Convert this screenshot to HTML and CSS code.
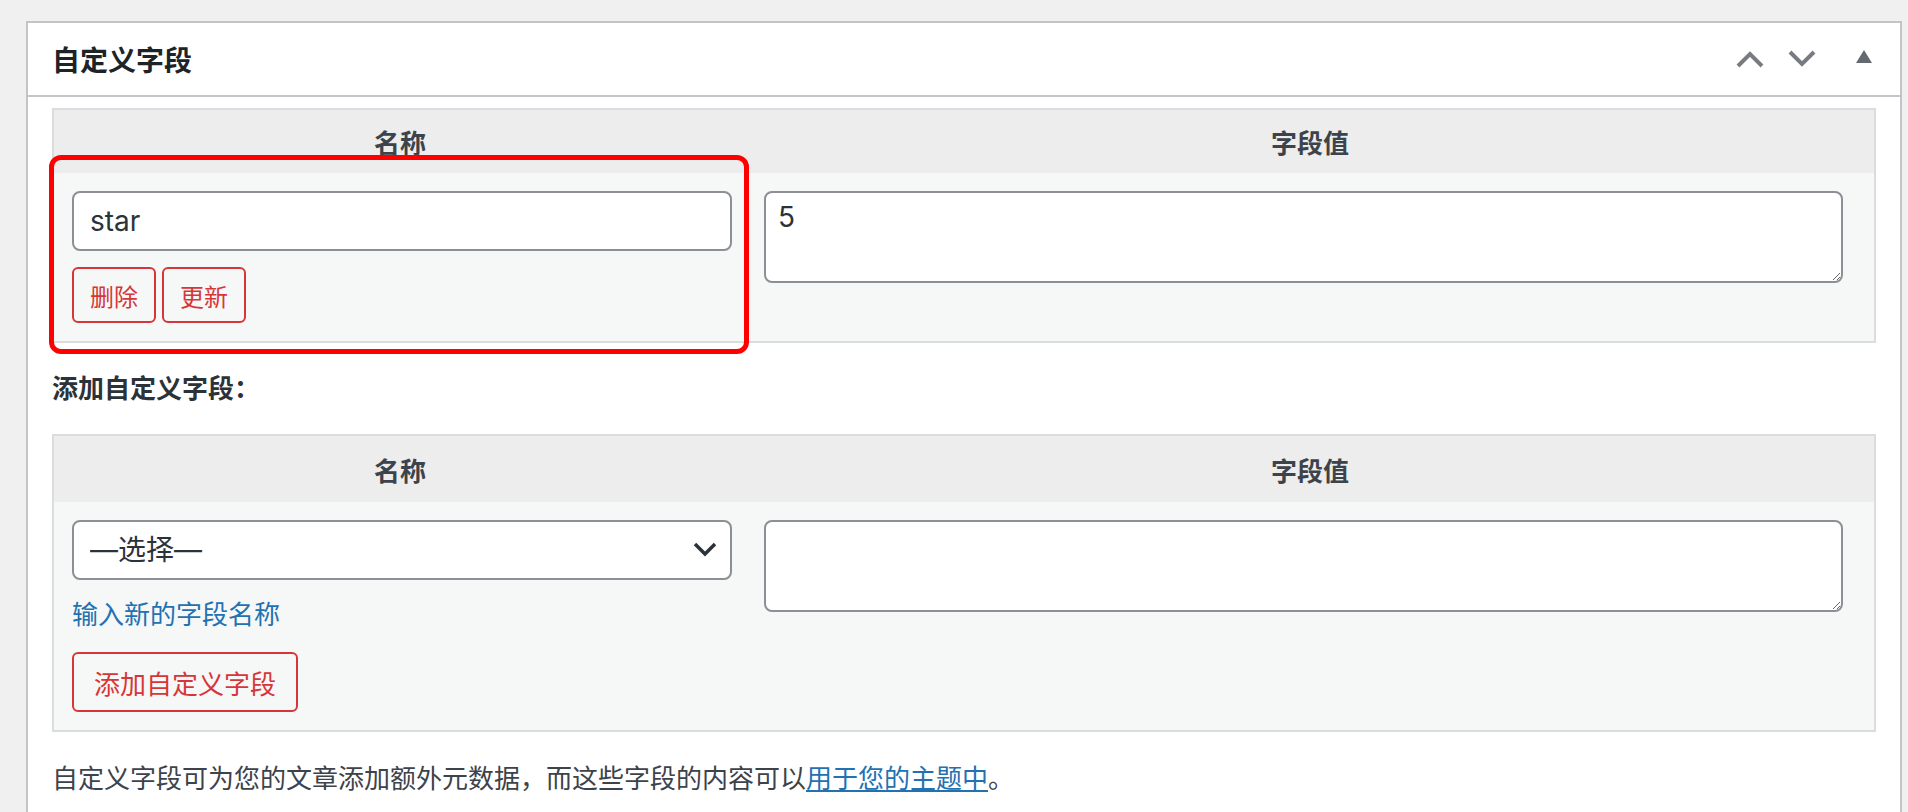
FILE: index.html
```html
<!DOCTYPE html>
<html lang="zh-CN">
<head>
  <meta charset="UTF-8" />
  <meta name="viewport" content="width=device-width, initial-scale=1.0"/>
  <title>自定义字段</title>
  <link rel="stylesheet" href="styles.css">
</head>
<body>
  <div class="postbox" id="postcustom">
    <div class="postbox-header">
      <h2>自定义字段</h2>
      <div class="handle-actions">
        <button class="handle-btn" aria-label="上移">
          <svg width="28" height="18" viewBox="0 0 28 18"><polyline points="2,16 14,4 26,16" fill="none" stroke="#787c82" stroke-width="4"/></svg>
        </button>
        <button class="handle-btn" aria-label="下移">
          <svg width="28" height="18" viewBox="0 0 28 18"><polyline points="2,2 14,14 26,2" fill="none" stroke="#787c82" stroke-width="4"/></svg>
        </button>
        <button class="handle-btn toggle" aria-label="折叠">
          <svg width="16" height="14" viewBox="0 0 16 14"><polygon points="0,13 8,0 16,13" fill="#646970"/></svg>
        </button>
      </div>
    </div>

    <div class="inside">
      <div class="meta-wrap">
        <table class="meta-table">
          <thead>
            <tr><th class="left">名称</th><th>字段值</th></tr>
          </thead>
          <tbody>
            <tr>
              <td class="left">
                <input type="text" class="field" value="star">
                <div class="row-actions">
                  <button class="btn btn-small">删除</button>
                  <button class="btn btn-small">更新</button>
                </div>
              </td>
              <td><textarea class="field-area" rows="2">5</textarea></td>
            </tr>
          </tbody>
        </table>
        <!-- annotation around the existing field -->
        <div class="highlight"></div>
      </div>

      <p class="add-title"><strong>添加自定义字段：</strong></p>

      <table class="meta-table new-meta">
        <thead>
          <tr><th class="left">名称</th><th>字段值</th></tr>
        </thead>
        <tbody>
          <tr>
            <td class="left">
              <div class="select-wrap">
                <select class="field">
                  <option>—选择—</option>
                </select>
                <svg class="select-arrow" width="24" height="16" viewBox="0 0 24 16"><polyline points="2,2 12,12 22,2" fill="none" stroke="#2c3338" stroke-width="3.5"/></svg>
              </div>
              <a href="#" class="enter-new">输入新的字段名称</a>
              <button class="btn">添加自定义字段</button>
            </td>
            <td><textarea class="field-area" rows="2"></textarea></td>
          </tr>
        </tbody>
      </table>

      <p class="help">自定义字段可为您的文章添加额外元数据，而这些字段的内容可以<a href="#">用于您的主题中</a>。</p>
    </div>
  </div>
</body>
</html>
```

FILE: styles.css
```css
* {
  margin: 0;
  padding: 0;
  box-sizing: border-box;
}

html, body {
  height: 100%;
  overflow: hidden;
}

body {
  background-color: #f0f0f1;
  padding: 21px 6px 0 26px;
  font-family: "Inter", "Noto Sans CJK SC", sans-serif;
  color: #3c434a;
}

.postbox {
  background-color: #fff;
  border: 2px solid #c3c4c7;
  border-bottom: none;
  height: 100%;
}

.postbox-header {
  height: 74px;
  display: flex;
  align-items: center;
  justify-content: space-between;
  border-bottom: 2px solid #c3c4c7;
  padding-left: 24px;
}

.postbox-header h2 {
  font-size: 28px;
  font-weight: 700;
  color: #1d2327;
}

.handle-actions {
  display: flex;
  height: 100%;
}

.handle-btn {
  width: 52px;
  height: 100%;
  border: none;
  background: none;
  display: flex;
  align-items: center;
  justify-content: center;
  cursor: pointer;
}

.handle-btn svg {
  display: block;
}

.handle-btn.toggle {
  width: 72px;
  padding-bottom: 4px;
}

.inside {
  padding: 0 24px;
  margin-top: 11px;
}

.meta-wrap {
  position: relative;
}

.meta-table {
  width: 100%;
  table-layout: fixed;
  border-collapse: separate;
  border-spacing: 0;
  border: 2px solid #dcdcde;
}

.meta-table th {
  height: 63px;
  background-color: #ededee;
  font-size: 26px;
  font-weight: 700;
  color: #3c434a;
  text-align: center;
}

.new-meta th {
  height: 66px;
}

.meta-table th.left {
  width: 692px;
}

.meta-table td {
  background-color: #f6f7f7;
  vertical-align: top;
  padding: 18px 31px 18px 18px;
}

.meta-table td.left {
  padding: 18px 14px 18px 18px;
}

.field {
  display: block;
  width: 100%;
  height: 60px;
  border: 2px solid #8c8f94;
  border-radius: 8px;
  background-color: #fff;
  padding: 0 16px;
  font-family: inherit;
  font-size: 28px;
  color: #2c3338;
}

.field-area {
  display: block;
  width: 100%;
  height: 92px;
  border: 2px solid #8c8f94;
  border-radius: 8px;
  background-color: #fff;
  padding: 4px 12px;
  font-family: inherit;
  font-size: 28px;
  line-height: 40px;
  color: #2c3338;
}

.select-wrap {
  position: relative;
}

.select-wrap select {
  appearance: none;
  -webkit-appearance: none;
  padding-right: 50px;
}

.select-arrow {
  position: absolute;
  right: 15px;
  top: 22px;
}

.row-actions {
  display: flex;
  gap: 6px;
  margin-top: 16px;
}

.btn {
  height: 60px;
  padding: 0 20px;
  border: 2px solid #d63638;
  border-radius: 6px;
  background-color: #f6f7f7;
  color: #d63638;
  font-family: inherit;
  font-size: 26px;
  cursor: pointer;
}

.btn-small {
  height: 56px;
  padding: 0 16px;
  font-size: 24px;
}

.enter-new {
  display: block;
  width: fit-content;
  margin: 15px 0 17px;
  font-size: 26px;
  line-height: 40px;
  color: #2271b1;
  text-decoration: none;
}

.add-title {
  margin: 26px 0 25px;
  font-size: 26px;
  line-height: 40px;
  color: #2c3338;
}

.help {
  margin-top: 27px;
  font-size: 26px;
  line-height: 40px;
  color: #3c434a;
}

.help a {
  color: #2271b1;
}

.highlight {
  position: absolute;
  left: -3px;
  top: 47px;
  width: 700px;
  height: 199px;
  border: 5px solid #ff0000;
  border-radius: 12px;
  pointer-events: none;
}
```
